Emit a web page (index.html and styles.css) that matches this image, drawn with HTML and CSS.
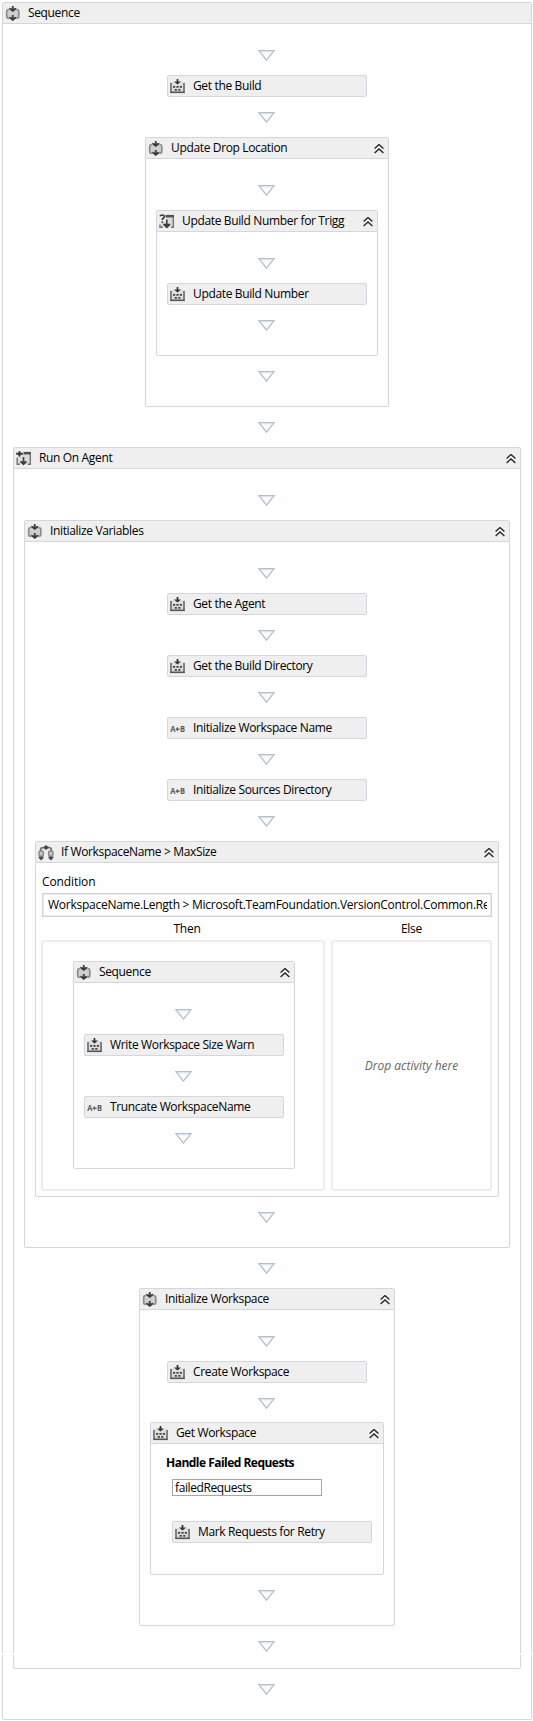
FILE: index.html
```html
<!DOCTYPE html>
<html lang="en">
<head>
<meta charset="utf-8">
<title>Workflow</title>
<link rel="stylesheet" href="styles.css">
</head>
<body>
<svg class="defs" width="0" height="0">
  <symbol id="i-arrow" viewBox="0 0 18 11">
    <path d="M1 .7H16L8.500 10.100Z" fill="#fdfdfe" stroke="#b4bfce" stroke-width="1.300"/>
    <path d="M2.500 1.800H14.500" stroke="#dbe2ec" stroke-width="1"/>
  </symbol>
  <symbol id="i-chev" viewBox="0 0 10 10">
    <path d="M.6 4.500L5 .5L9.400 4.500M.6 8.900L5 4.900L9.400 8.900" fill="none" stroke="#222" stroke-width="1.300"/>
  </symbol>
  <symbol id="i-build" viewBox="0 0 16 16">
    <path d="M0 3H15V14H0Z" fill="#dedede"/>
    <path d="M1 4V13.200H14V4" fill="none" stroke="#6a6a6a" stroke-width="1.600"/>
    <path d="M.2 13.500H14.800" stroke="#555" stroke-width="1.200"/>
    <path d="M7.500 0V3" stroke="#333" stroke-width="1.700"/>
    <path d="M4 2.500H11L7.500 5.600Z" fill="#333"/>
    <path d="M3 7h2.200v1.700H3zM6.400 7h2.200v1.700H6.400zM9.800 7H12v1.700H9.800zM4.700 10h2.200v1.700H4.700zM8.200 10h2.200v1.700H8.200z" fill="#444"/>
  </symbol>
  <symbol id="i-seq" viewBox="0 0 16 16">
    <rect x="2" y="3.500" width="11.500" height="9" rx="1.500" fill="#cfcfcf"/>
    <path d="M4 3.500Q1.700 3.700 1.700 5.500V10.500Q1.700 12.300 4 12.500M11.500 3.500Q13.800 3.700 13.800 5.500V10.500Q13.800 12.300 11.500 12.500" fill="none" stroke="#8c8c8c" stroke-width="1.700"/>
    <path d="M7.750 0V3M7.750 9V12" stroke="#444" stroke-width="1.900"/>
    <path d="M4.200 1.800L7.750 2.700L11.300 1.800V3.200L7.750 6L4.200 3.200ZM4.200 10.800L7.750 11.700L11.300 10.800V12.200L7.750 15L4.200 12.200Z" fill="#3c3c3c"/>
  </symbol>
  <symbol id="i-ask" viewBox="0 0 16 16">
    <path d="M7 3H14V13H2V8H7Z" fill="#dcdcdc"/>
    <path d="M1 2.300Q1.500 1 3.200 1Q5.200 1 5.100 2.900Q5 3.900 4 4.500Q3.300 5 3.300 6.100M3.300 7.300V8.800" fill="none" stroke="#333" stroke-width="1.700"/>
    <path d="M6.500 2.200H15" stroke="#505050" stroke-width="2.600"/>
    <path d="M14.300 3V13.200H12M1 10.500V13.200H4" fill="none" stroke="#777" stroke-width="1.500"/>
    <path d="M7.800 5.500V11" stroke="#444" stroke-width="1.700"/>
    <path d="M4.300 9.800H11.300V11L7.800 14.500L4.300 11Z" fill="#3c3c3c"/>
  </symbol>
  <symbol id="i-agent" viewBox="0 0 16 16">
    <path d="M2 4H14V13H2Z" fill="#dcdcdc"/>
    <path d="M.2 2.800H6.800M3.500 .3V5.500" stroke="#333" stroke-width="1.900"/>
    <path d="M7.500 2.200H15" stroke="#505050" stroke-width="2.600"/>
    <path d="M14.300 3V13.200H11.500M1.200 6.500V13.200H4" fill="none" stroke="#777" stroke-width="1.500"/>
    <path d="M7.500 6V12" stroke="#444" stroke-width="1.700"/>
    <path d="M4.200 10.200H10.800V11.300L7.500 14.600L4.200 11.300Z" fill="#3c3c3c"/>
  </symbol>
  <symbol id="i-if" viewBox="0 0 16 16">
    <path d="M2.800 6V4.300Q2.800 2.600 5 2.600H11Q13.200 2.600 13.200 4.300V6" fill="none" stroke="#777" stroke-width="1.900"/>
    <path d="M5.200 2.500L8 0L10.800 2.500L8 5Z" fill="#444"/>
    <rect x="1" y="5.800" width="4.400" height="5.400" rx="1.500" fill="#c4c4c4" stroke="#808080" stroke-width="1.300"/>
    <rect x="10.600" y="5.800" width="4.400" height="5.400" rx="1.500" fill="#c4c4c4" stroke="#808080" stroke-width="1.300"/>
    <path d="M.6 11.500H5.600V13L3.100 15.400L.6 13ZM10.400 11.500H15.400V13L12.900 15.400L10.400 13Z" fill="#505050"/>
  </symbol>
  <symbol id="i-assign" viewBox="0 0 16 16">
    <text class="assign" x="0.3" y="11.300" textLength="5.200" lengthAdjust="spacingAndGlyphs">A</text>
    <text class="assign" x="10" y="11.300" textLength="5" lengthAdjust="spacingAndGlyphs">B</text>
    <path d="M5.300 8.200L8 5.800V7.400H9.600V9H8V10.600Z" fill="#666"/>
  </symbol>
</svg>

<main class="box root">
  <header class="bar"><svg class="icon"><use href="#i-seq"/></svg><span>Sequence</span></header>
  <div class="flow root-flow">
    <svg class="arrow"><use href="#i-arrow"/></svg>
    <div class="item"><svg class="icon"><use href="#i-build"/></svg><span>Get the Build</span></div>
    <svg class="arrow"><use href="#i-arrow"/></svg>

    <section class="box">
      <header class="bar"><svg class="icon"><use href="#i-seq"/></svg><span>Update Drop Location</span><svg class="chev"><use href="#i-chev"/></svg></header>
      <div class="flow">
        <svg class="arrow"><use href="#i-arrow"/></svg>
        <section class="box">
          <header class="bar"><svg class="icon"><use href="#i-ask"/></svg><span>Update Build Number for Trigg</span><svg class="chev"><use href="#i-chev"/></svg></header>
          <div class="flow">
            <svg class="arrow"><use href="#i-arrow"/></svg>
            <div class="item"><svg class="icon"><use href="#i-build"/></svg><span>Update Build Number</span></div>
            <svg class="arrow"><use href="#i-arrow"/></svg>
          </div>
        </section>
        <svg class="arrow"><use href="#i-arrow"/></svg>
      </div>
    </section>
    <svg class="arrow"><use href="#i-arrow"/></svg>

    <section class="box">
      <header class="bar"><svg class="icon"><use href="#i-agent"/></svg><span>Run On Agent</span><svg class="chev"><use href="#i-chev"/></svg></header>
      <div class="flow agent-flow">
        <svg class="arrow"><use href="#i-arrow"/></svg>
        <section class="box">
          <header class="bar"><svg class="icon"><use href="#i-seq"/></svg><span>Initialize Variables</span><svg class="chev"><use href="#i-chev"/></svg></header>
          <div class="flow">
            <svg class="arrow"><use href="#i-arrow"/></svg>
            <div class="item"><svg class="icon"><use href="#i-build"/></svg><span>Get the Agent</span></div>
            <svg class="arrow"><use href="#i-arrow"/></svg>
            <div class="item"><svg class="icon"><use href="#i-build"/></svg><span>Get the Build Directory</span></div>
            <svg class="arrow"><use href="#i-arrow"/></svg>
            <div class="item"><svg class="icon"><use href="#i-assign"/></svg><span>Initialize Workspace Name</span></div>
            <svg class="arrow"><use href="#i-arrow"/></svg>
            <div class="item"><svg class="icon"><use href="#i-assign"/></svg><span>Initialize Sources Directory</span></div>
            <svg class="arrow"><use href="#i-arrow"/></svg>

            <section class="box">
              <header class="bar"><svg class="icon"><use href="#i-if"/></svg><span>If WorkspaceName &gt; MaxSize</span><svg class="chev"><use href="#i-chev"/></svg></header>
              <div class="if-body">
                <div class="cond-label">Condition</div>
                <div class="cond-field"><div class="cond-text">WorkspaceName.Length &gt; Microsoft.TeamFoundation.VersionControl.Common.Re</div></div>
                <div class="branches">
                  <div class="branch-label then-label">Then</div>
                  <div class="branch-label">Else</div>
                  <div class="panel then-panel">
                    <section class="box">
                      <header class="bar"><svg class="icon"><use href="#i-seq"/></svg><span>Sequence</span><svg class="chev"><use href="#i-chev"/></svg></header>
                      <div class="flow">
                        <svg class="arrow"><use href="#i-arrow"/></svg>
                        <div class="item"><svg class="icon"><use href="#i-build"/></svg><span>Write Workspace Size Warn</span></div>
                        <svg class="arrow"><use href="#i-arrow"/></svg>
                        <div class="item"><svg class="icon"><use href="#i-assign"/></svg><span>Truncate WorkspaceName</span></div>
                        <svg class="arrow"><use href="#i-arrow"/></svg>
                      </div>
                    </section>
                  </div>
                  <div class="panel else-panel">Drop activity here</div>
                </div>
              </div>
            </section>
            <svg class="arrow"><use href="#i-arrow"/></svg>
          </div>
        </section>
        <svg class="arrow"><use href="#i-arrow"/></svg>

        <section class="box">
          <header class="bar"><svg class="icon"><use href="#i-seq"/></svg><span>Initialize Workspace</span><svg class="chev"><use href="#i-chev"/></svg></header>
          <div class="flow">
            <svg class="arrow"><use href="#i-arrow"/></svg>
            <div class="item"><svg class="icon"><use href="#i-build"/></svg><span>Create Workspace</span></div>
            <svg class="arrow tight"><use href="#i-arrow"/></svg>
            <section class="box get-workspace">
              <header class="bar"><svg class="icon"><use href="#i-build"/></svg><span>Get Workspace</span><svg class="chev"><use href="#i-chev"/></svg></header>
              <div class="failed">
                <div class="failed-title">Handle Failed Requests</div>
                <div class="failed-field">failedRequests</div>
                <div class="item"><svg class="icon"><use href="#i-build"/></svg><span>Mark Requests for Retry</span></div>
              </div>
            </section>
            <svg class="arrow"><use href="#i-arrow"/></svg>
          </div>
        </section>
        <svg class="arrow"><use href="#i-arrow"/></svg>
      </div>
    </section>
    <svg class="arrow"><use href="#i-arrow"/></svg>
  </div>
  <div class="seam"></div>
</main>
</body>
</html>
```
FILE: styles.css
```css
* { box-sizing: border-box; }

body {
  margin: 0;
  padding: 2px 1px 0 2px;
  background: #fefefe;
  color: #000;
  font: 12px/16px "Open Sans", "Noto Sans", sans-serif;
  letter-spacing: -0.25px;
}

.defs { display: block; }

.box {
  border: 1px solid #d5d5e1;
  border-radius: 2px;
  background: #fefefe;
}

.root {
  position: relative;
  height: 1718px;
}

/* Page break line that interrupts the outer borders */
.seam {
  position: absolute;
  right: -1px;
  bottom: 64px;
  left: -1px;
  height: 2px;
  background: #fefefe;
  opacity: 0.8;
}

.bar,
.item {
  display: flex;
  align-items: flex-start;
  background: #efefef;
  white-space: nowrap;
}

.bar {
  height: 21px;
  padding: 2px 4px 0 2px;
  border-bottom: 1px solid #d5d5e1;
}

.item {
  width: 200px;
  height: 22px;
  padding: 2px 4px 0 2px;
  border: 1px solid #d5d5e1;
  border-radius: 2px;
}

.icon {
  flex: none;
  width: 16px;
  height: 16px;
  margin: 1px 7px 0 0;
}

.bar span,
.item span {
  flex: 1;
  letter-spacing: -0.35px;
}

.chev {
  flex: none;
  width: 10px;
  height: 10px;
  margin-top: 4px;
}

.assign {
  font: bold 9px "Open Sans", sans-serif;
  letter-spacing: 0;
  fill: #5a5a5a;
}

.flow {
  display: flex;
  flex-direction: column;
  align-items: center;
  padding: 11px 10px 10px;
}

.flow > .box { min-width: 222px; }

.arrow {
  flex: none;
  width: 18px;
  height: 11px;
  margin: 15px 0 14px;
}

.arrow.tight { margin-bottom: 13px; }

.agent-flow { padding-bottom: 2px; }

.root-flow { padding-bottom: 0; }

.if-body {
  width: 462px;
  padding: 11px 6px 5px 5px;
}

.cond-label {
  padding-left: 1px;
  letter-spacing: -0.1px;
}

.cond-field {
  height: 24px;
  margin: 3px 0 0 1px;
  padding: 3px 4px 0 3px;
  border: 1px solid #d0d0e0;
  box-shadow: inset 0 0 0 1px #e9e9f2;
}

.cond-text {
  overflow: hidden;
  padding-left: 2px;
  letter-spacing: -0.26px;
  white-space: nowrap;
}

.branches {
  display: grid;
  grid-template-columns: 284px 161px;
  grid-template-rows: 23px 251px;
  column-gap: 6px;
}

.branch-label {
  padding-top: 4px;
  text-align: center;
}

.then-label { padding-left: 8px; }

.panel {
  border: 2px solid #ececf2;
  border-radius: 3px;
}

.then-panel { padding: 19px 28px 0 30px; }

.else-panel {
  display: flex;
  align-items: center;
  justify-content: center;
  color: #666;
  font-style: italic;
  letter-spacing: 0;
}

.get-workspace {
  width: 234px;
  height: 153px;
}

.failed { padding: 11px 11px 0 21px; }

.failed-title {
  margin-left: -6px;
  font-weight: bold;
  letter-spacing: -0.52px;
}

.failed-field {
  width: 150px;
  height: 17px;
  margin: 8px 0 25px;
  padding-left: 2px;
  border: 1px solid #a6a6a6;
  letter-spacing: -0.4px;
  line-height: 15px;
}
```
